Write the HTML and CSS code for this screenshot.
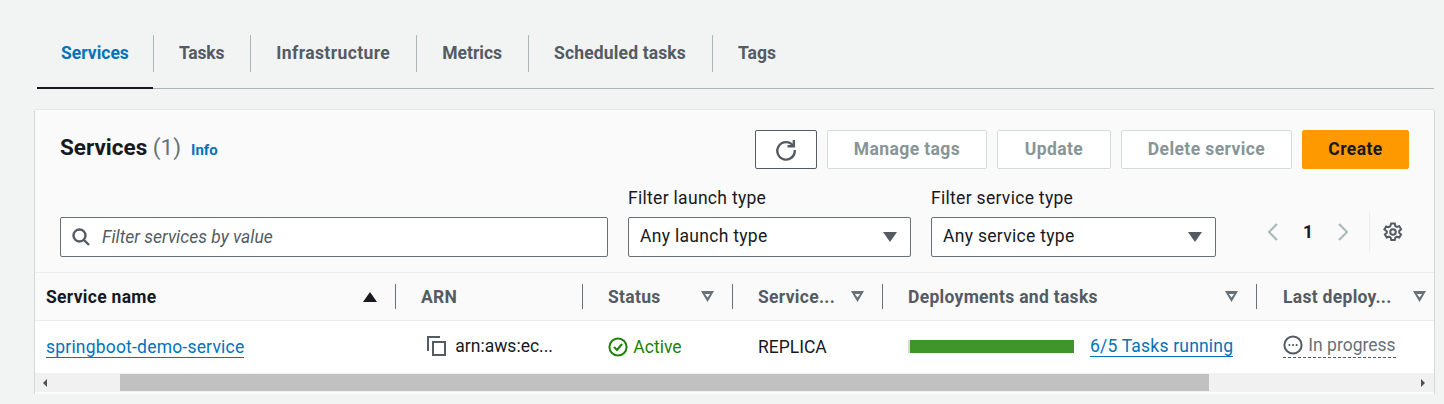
FILE: index.html
```html
<!DOCTYPE html>
<html lang="en">
<head>
    <meta charset="UTF-8">
    <title>Services</title>
    <link rel="stylesheet" href="styles.css">
</head>

<body>
    <div class="tabs">
        <a class="tab active">Services</a>
        <a class="tab tight">Tasks</a>
        <a class="tab wide">Infrastructure</a>
        <a class="tab">Metrics</a>
        <a class="tab loose">Scheduled tasks</a>
        <a class="tab">Tags</a>
    </div>

    <div class="card">
        <div class="card-top">
            <div class="title">
                <h2>Services <span class="count">(1)</span></h2>
                <a class="info">Info</a>
            </div>
            <div class="actions">
                <button class="btn refresh">
                    <svg width="24" height="24" viewBox="0 0 22 22" fill="none" stroke="#545b64" stroke-width="2.2">
                        <path d="M17.6 7.2A8 8 0 1 0 19 11"/>
                        <path d="M18.2 1.8v5.8h-5.8"/>
                    </svg>
                </button>
                <button class="btn off tags">Manage tags</button>
                <button class="btn off update">Update</button>
                <button class="btn off delete">Delete service</button>
                <button class="btn create">Create</button>
            </div>
        </div>

        <div class="filters">
            <div class="search">
                <svg width="20" height="20" viewBox="0 0 20 20" fill="none" stroke="#545b64" stroke-width="2.4">
                    <circle cx="8.5" cy="8.5" r="6"/>
                    <path d="M13 13l5 5"/>
                </svg>
                <span>Filter services by value</span>
            </div>
            <div class="field launch">
                <label>Filter launch type</label>
                <div class="select">Any launch type <i class="caret"></i></div>
            </div>
            <div class="field service">
                <label>Filter service type</label>
                <div class="select">Any service type <i class="caret"></i></div>
            </div>
            <div class="pager">
                <svg width="14" height="20" viewBox="0 0 14 20" fill="none" stroke="#aab7b8" stroke-width="2"><path d="M11 2L3 10l8 8"/></svg>
                <span class="page">1</span>
                <svg width="14" height="20" viewBox="0 0 14 20" fill="none" stroke="#aab7b8" stroke-width="2"><path d="M3 2l8 8-8 8"/></svg>
                <span class="pager-line"></span>
                <svg width="20" height="20" viewBox="0 0 20 20" fill="none" stroke="#545b64" stroke-width="2">
                    <circle cx="10" cy="10" r="2.8"/>
                    <path d="M8.2 1.5h3.6l.5 2.5 1.6.9 2.4-.8 1.8 3.1-1.9 1.7v1.8l1.9 1.7-1.8 3.1-2.4-.8-1.6.9-.5 2.5H8.2l-.5-2.5-1.6-.9-2.4.8-1.8-3.1 1.9-1.7V9.2L1.4 7.5l1.8-3.1 2.4.8 1.6-.9z"/>
                </svg>
            </div>
        </div>

        <table class="services">
            <colgroup>
                <col class="c1"><col class="c2"><col class="c3"><col class="c4"><col class="c5"><col class="c6">
            </colgroup>
            <thead>
                <tr>
                    <th class="first"><div class="th">Service name <i class="sort"></i></div></th>
                    <th><div class="th">ARN</div></th>
                    <th><div class="th">Status <i class="tri"></i></div></th>
                    <th><div class="th">Service... <i class="tri"></i></div></th>
                    <th><div class="th">Deployments and tasks <i class="tri"></i></div></th>
                    <th class="last"><div class="th">Last deploy... <i class="tri"></i></div></th>
                </tr>
            </thead>
            <tbody>
                <tr>
                    <td class="first"><a class="link">springboot-demo-service</a></td>
                    <td class="arn">
                        <svg width="22" height="22" viewBox="0 0 22 22" fill="none" stroke="#545b64" stroke-width="2">
                            <path d="M2 16V2h12"/>
                            <path d="M7 7h12v13H7z"/>
                        </svg>
                        arn:aws:ec...
                    </td>
                    <td class="status">
                        <svg width="20" height="20" viewBox="0 0 20 20" fill="none" stroke="#1d8102" stroke-width="2">
                            <circle cx="10" cy="10" r="8.6"/>
                            <path d="M6 10l3 3 5-6"/>
                        </svg>
                        Active
                    </td>
                    <td>REPLICA</td>
                    <td>
                        <div class="deploy">
                            <div class="bar"><div class="bar-fill"></div></div>
                            <a class="link">6/5 Tasks running</a>
                        </div>
                    </td>
                    <td class="last">
                        <span class="progress">
                            <svg width="20" height="20" viewBox="0 0 20 20" fill="none" stroke="#545b64" stroke-width="2">
                                <circle cx="10" cy="10" r="8.6"/>
                                <path d="M5.6 10h1.6M9.2 10h1.6M12.8 10h1.6"/>
                            </svg>
                            In progress
                        </span>
                    </td>
                </tr>
            </tbody>
        </table>

        <div class="scrollbar">
            <i class="arrow left"></i>
            <div class="thumb"></div>
            <i class="arrow right"></i>
        </div>
    </div>
</body>
</html>
```

FILE: styles.css
```css
* {
    box-sizing: border-box;
    font-family: Roboto, sans-serif;
}
body {
    margin: 0;
    padding: 35px 10px 0 35px;
    background-color: #f2f3f3;
    color: #16191f;
    font-size: 17.5px;
}

.tabs {
    display: flex;
    margin-left: 2px;
    height: 54px;
    border-bottom: 1px solid #a9b7b8;
}
.tab {
    position: relative;
    height: 54px;
    padding: 6px 26px 0;
    font-size: 17.5px;
    font-weight: 700;
    line-height: 24px;
    color: #545b64;
}
.tab + .tab::before {
    content: "";
    position: absolute;
    left: 0;
    top: 0;
    height: 37px;
    width: 1px;
    background-color: #a9b7b8;
}
.tab.active {
    width: 116px;
    padding-left: 24px;
    color: #0073bb;
    border-bottom: 2px solid #16191f;
}
.tab.tight {
    letter-spacing: -0.2px;
}
.tab.wide {
    letter-spacing: 0.4px;
}
.tab.loose {
    letter-spacing: 0.15px;
}

.card {
    margin-top: 21px;
    height: 284px;
    background-color: #fafafa;
    box-shadow: 0 1px 1px rgba(0, 28, 36, 0.4), 0 0 1px rgba(0, 28, 36, 0.3);
}

.card-top {
    display: flex;
    justify-content: space-between;
    padding: 20px 25px 0;
}
.title {
    display: flex;
    align-items: center;
    gap: 10px;
    height: 33px;
}
h2 {
    margin: 0;
    font-size: 22.5px;
    font-weight: 700;
}
.count {
    font-weight: 400;
    color: #687078;
}
.info {
    padding-top: 6px;
    font-size: 15px;
    font-weight: 700;
    color: #0073bb;
}

.actions {
    display: flex;
    gap: 10px;
}
.btn {
    height: 39px;
    border: 1px solid #d5dbdb;
    border-radius: 2px;
    background-color: #fff;
    font-size: 17.5px;
    font-weight: 700;
    letter-spacing: 0.4px;
    padding: 0 0 2px;
}
.btn.off {
    color: #879596;
}
.refresh {
    width: 62px;
    padding: 0;
    border-color: #545b64;
    display: flex;
    align-items: center;
    justify-content: center;
}
.tags {
    width: 160px;
}
.update {
    width: 114px;
}
.delete {
    width: 171px;
}
.create {
    width: 107px;
    border-color: #ff9900;
    background-color: #ff9900;
    color: #16191f;
}

.filters {
    display: flex;
    align-items: flex-end;
    padding: 0 25px;
    margin-top: 27px;
    height: 61px;
}
.search {
    display: flex;
    align-items: center;
    gap: 11px;
    width: 548px;
    height: 40px;
    padding-left: 10px;
    border: 1px solid #687078;
    border-radius: 2px;
    background-color: #fff;
    font-style: italic;
    color: #545b64;
}
.field {
    margin-left: 20px;
    letter-spacing: 0.3px;
}
.field label {
    display: block;
    height: 21px;
    line-height: 21px;
    margin-bottom: 8px;
}
.select {
    display: flex;
    align-items: center;
    justify-content: space-between;
    height: 40px;
    padding: 0 13px 2px 11px;
    border: 1px solid #687078;
    border-radius: 2px;
    background-color: #fff;
}
.launch .select {
    width: 283px;
}
.service .select {
    width: 285px;
}
.caret {
    width: 0;
    height: 0;
    margin-top: 2px;
    border-left: 7px solid transparent;
    border-right: 7px solid transparent;
    border-top: 10px solid #545b64;
}

.pager {
    display: flex;
    align-items: center;
    height: 40px;
    margin-left: 50px;
    margin-bottom: 5px;
    font-size: 17.5px;
}
.page {
    width: 56px;
    text-align: center;
    font-weight: 700;
}
.pager-line {
    width: 1px;
    height: 40px;
    margin: 0 13px 0 19px;
    background-color: #eaeded;
}

.services {
    width: 100%;
    margin-top: 15px;
    border-collapse: collapse;
    table-layout: fixed;
    border-top: 1px solid #eaeded;
}
.c1 {
    width: 361px;
}
.c2 {
    width: 187px;
}
.c3 {
    width: 150px;
}
.c4 {
    width: 150px;
}
.c5 {
    width: 374px;
}
.services th {
    height: 48px;
    padding: 0;
    text-align: left;
    font-weight: 700;
    letter-spacing: 0.3px;
    color: #545b64;
    border-bottom: 1px solid #eaeded;
}
.th {
    display: flex;
    align-items: center;
    justify-content: space-between;
    height: 25px;
    padding: 0 18px 0 25px;
    border-right: 1px solid #687078;
    white-space: nowrap;
}
.services th.first {
    color: #16191f;
}
.first .th {
    padding-left: 11px;
    padding-right: 18px;
}
.last .th {
    border-right: 0;
    padding-left: 26px;
    padding-right: 8px;
}
.sort {
    width: 0;
    height: 0;
    border-left: 7px solid transparent;
    border-right: 7px solid transparent;
    border-bottom: 10px solid #16191f;
}
.tri {
    width: 13px;
    height: 11px;
    flex-shrink: 0;
    background-color: #687078;
    clip-path: polygon(0 0, 100% 0, 50% 100%, 0 0, 30% 28%, 50% 60%, 70% 28%, 30% 28%);
}

.services td {
    height: 52px;
    padding: 0 0 0 25px;
    background-color: #fff;
    white-space: nowrap;
}
.services td.first {
    padding-left: 11px;
}
.services td.arn {
    padding-left: 30px;
}
.services td.last {
    padding-left: 26px;
}
.arn svg,
.status svg,
.progress svg {
    vertical-align: middle;
    margin-top: -2px;
    margin-right: 1px;
}
.arn svg {
    margin-right: 3px;
}
.status {
    color: #1d8102;
}
.link {
    color: #0073bb;
    letter-spacing: 0.2px;
    border-bottom: 1px solid #0073bb;
}
.deploy {
    display: flex;
    align-items: center;
    gap: 16px;
}
.bar {
    width: 166px;
    height: 13px;
    padding-left: 2px;
    background-color: #d5dbdb;
}
.bar-fill {
    height: 13px;
    background-color: #3f942a;
}
.progress {
    display: inline-block;
    color: #687078;
    border-bottom: 1px dashed #545b64;
    padding-bottom: 2px;
}

.scrollbar {
    display: flex;
    align-items: center;
    height: 19px;
    padding-top: 1px;
    background-color: #f1f1f1;
}
.thumb {
    width: 1089px;
    height: 17px;
    margin-left: 73px;
    background-color: #c1c1c1;
}
.arrow {
    width: 0;
    height: 0;
    border-top: 4px solid transparent;
    border-bottom: 4px solid transparent;
}
.arrow.left {
    margin-left: 8px;
    border-right: 4px solid #505050;
}
.arrow.right {
    margin-left: 212px;
    border-left: 4px solid #505050;
}
```
